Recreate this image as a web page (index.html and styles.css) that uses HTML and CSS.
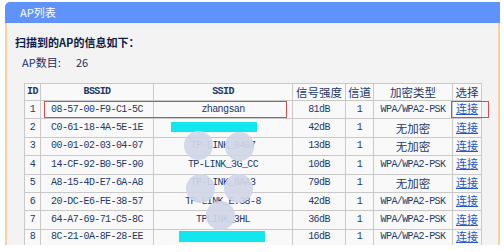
FILE: index.html
```html
<!DOCTYPE html>
<html>
<head>
<meta charset="utf-8">
<link rel="stylesheet" href="styles.css">
</head>
<body>
<div class="panel">
  <div class="head">AP列表</div>
  <div class="body">
    <div class="title">扫描到的AP的信息如下：</div>
    <div class="count"><span class="lbl">AP数目:</span><span class="num">26</span></div>
    <table class="grid">
      <colgroup>
        <col class="c-id"><col class="c-bssid"><col class="c-ssid"><col class="c-sig"><col class="c-ch"><col class="c-enc"><col class="c-sel">
      </colgroup>
      <tr class="hrow">
        <th class="lat">ID</th><th class="lat">BSSID</th><th class="lat">SSID</th><th class="zh">信号强度</th><th class="zh">信道</th><th class="zh">加密类型</th><th class="zh">选择</th>
      </tr>
      <tr><td>1</td><td>08-57-00-F9-C1-5C</td><td class="ssid">zhangsan</td><td>81dB</td><td>1</td><td>WPA/WPA2-PSK</td><td><a class="link">连接</a></td></tr>
      <tr><td>2</td><td>C0-61-18-4A-5E-1E</td><td class="ssid"><span class="mask m2"></span></td><td>42dB</td><td>1</td><td class="zh">无加密</td><td><a class="link">连接</a></td></tr>
      <tr><td>3</td><td>00-01-02-03-04-07</td><td class="ssid">TP-LINK_0407</td><td>13dB</td><td>1</td><td class="zh">无加密</td><td><a class="link">连接</a></td></tr>
      <tr><td>4</td><td>14-CF-92-B0-5F-90</td><td class="ssid">TP-LINK_3G_CC</td><td>10dB</td><td>1</td><td>WPA/WPA2-PSK</td><td><a class="link">连接</a></td></tr>
      <tr><td>5</td><td>A8-15-4D-E7-6A-A8</td><td class="ssid">TP-LINK_6AA3</td><td>79dB</td><td>1</td><td class="zh">无加密</td><td><a class="link">连接</a></td></tr>
      <tr><td>6</td><td>20-DC-E6-FE-38-57</td><td class="ssid">TP-LINK_E.38-8</td><td>42dB</td><td>1</td><td>WPA/WPA2-PSK</td><td><a class="link">连接</a></td></tr>
      <tr><td>7</td><td>64-A7-69-71-C5-8C</td><td class="ssid">TPLINK_3HL</td><td>36dB</td><td>1</td><td>WPA/WPA2-PSK</td><td><a class="link">连接</a></td></tr>
      <tr class="short"><td>8</td><td>8C-21-0A-8F-28-EE</td><td class="ssid"><span class="mask m8"></span></td><td>16dB</td><td>1</td><td>WPA/WPA2-PSK</td><td><a class="link">连接</a></td></tr>
      <tr><td></td><td></td><td></td><td></td><td></td><td></td><td></td></tr>
    </table>
  </div>
  <div class="mark mark-row"></div>
  <div class="mark mark-link"></div>
  <div class="blot b1"></div>
  <div class="blot b2"></div>
  <div class="blot b3"></div>
  <div class="blot b4"></div>
  <div class="blot b5"></div>
</div>
</body>
</html>
```
FILE: styles.css
```css
html, body {
  margin: 0;
  padding: 0;
  background: #ffffff;
}
body {
  padding: 2px 4px 0 5px;
  font-family: "Liberation Mono", "Noto Sans CJK SC", monospace;
}
.panel {
  position: relative;
  width: 495px;
  height: 243px;
  overflow: hidden;
  display: flex;
  flex-direction: column;
}
.head {
  height: 21px;
  line-height: 21px;
  background: #5f93fb;
  color: #ffffff;
  font-family: "Noto Sans CJK SC", sans-serif;
  font-size: 11px;
  padding-left: 15px;
  border-top-left-radius: 5px;
  flex: none;
}
.body {
  flex: 1;
  background: #f3f3f3;
  border-left: 2px solid #fbcf9f;
  border-right: 2px solid #fbcf9f;
  padding: 11px 0 0 8px;
}
.title {
  height: 16px;
  line-height: 16px;
  font-family: "Noto Sans CJK SC", sans-serif;
  font-size: 11px;
  font-weight: 700;
  color: #0e1d4a;
}
.count {
  margin: 4px 0 0 7px;
  height: 16px;
  line-height: 16px;
  font-family: "Noto Sans CJK SC", sans-serif;
  font-size: 11px;
  color: #1b2f5e;
  display: flex;
}
.count .lbl {
  width: 54px;
}
.grid {
  margin: 13px 0 0 9px;
  border-collapse: collapse;
  table-layout: fixed;
  width: 457px;
  background: #f9f9f9;
  color: #22396b;
}
.c-id { width: 16px; }
.c-bssid { width: 113px; }
.c-ssid { width: 139px; }
.c-sig { width: 53px; }
.c-ch { width: 28px; }
.c-enc { width: 79px; }
.c-sel { width: 29px; }
.grid th, .grid td {
  border: 1px solid #c9c9c9;
  padding: 0;
  text-align: center;
  white-space: nowrap;
  overflow: hidden;
  font-size: 10px;
  letter-spacing: -0.6px;
  line-height: 12px;
  font-weight: 400;
}
.grid tr { height: 18.4px; }
.grid tr.hrow { height: 17px; }
.grid tr.short { height: 13.5px; }
.grid th.lat { font-weight: 700; }
.grid .zh {
  font-family: "Noto Sans CJK SC", sans-serif;
  font-size: 11.5px;
  letter-spacing: 0;
}
.link {
  font-family: "Noto Sans CJK SC", sans-serif;
  font-size: 11px;
  letter-spacing: 0;
  color: #2456c8;
  text-decoration: underline;
}
.ssid { position: relative; }
.mask {
  display: inline-block;
  height: 10px;
  background: #12e6ef;
  vertical-align: middle;
}
.mask.m2 { width: 86px; margin-left: -19px; }
.mask.m8 { width: 86px; margin-left: -3px; height: 11px; }
.mark {
  position: absolute;
  border: 1px solid #e04848;
}
.mark-row { left: 39px; top: 99px; width: 241px; height: 15px; }
.mark-link { left: 446px; top: 99px; width: 36px; height: 15px; }
.blot {
  position: absolute;
  width: 29px;
  height: 29px;
  border-radius: 50%;
  background: rgba(208, 214, 232, 0.92);
}
.b1 { left: 179px; top: 129px; }
.b2 { left: 220px; top: 130px; }
.b3 { left: 181px; top: 172px; }
.b4 { left: 219px; top: 172px; }
.b5 { left: 201px; top: 199px; }
```
